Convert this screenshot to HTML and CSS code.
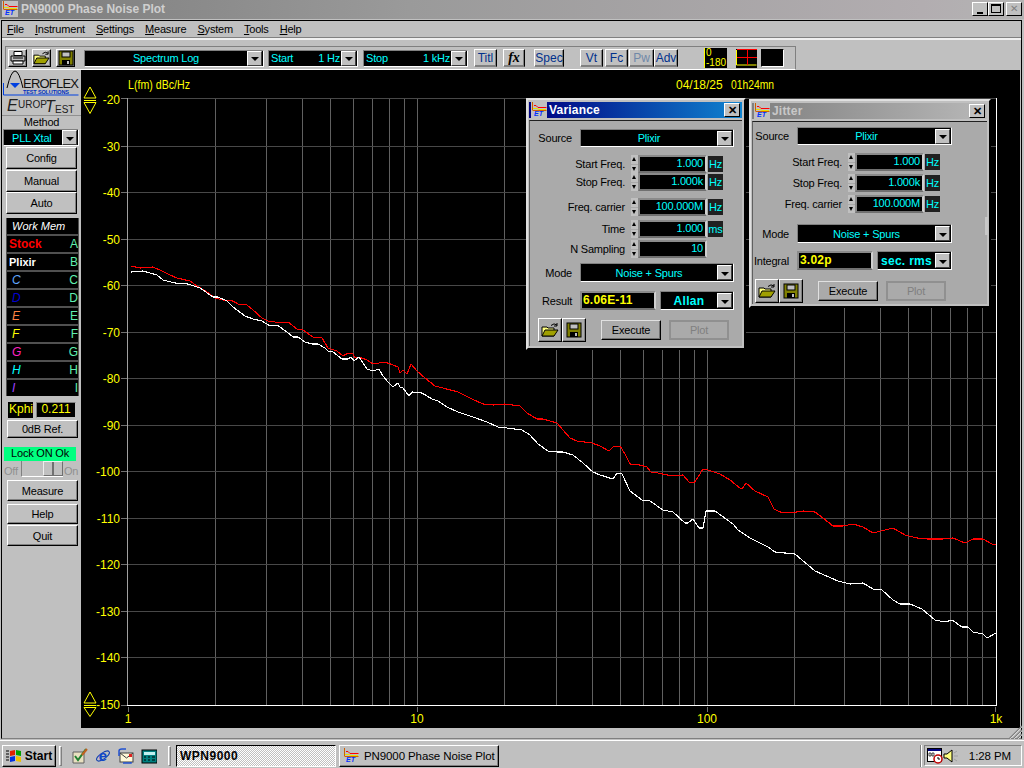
FILE: index.html
```html
<!DOCTYPE html>
<html lang="en">
<head>
    <meta charset="UTF-8">
    <title>PN9000 Phase Noise Plot</title>
    <link rel="stylesheet" href="styles.css">
</head>
<body>
    <svg class="defs" width="0" height="0">
        <symbol id="et-icon" viewBox="0 0 16 16">
            <rect width="16" height="16" fill="#c0c0c0"/>
            <path d="M1.5 0v8M1.5 8.500h14" stroke="#d06000" fill="none"/>
            <path d="M3 3.500h2l2 2h8.500" stroke="#ff0000" fill="none"/>
            <path d="M2 6.500h4l2 1h7" stroke="#e8e000" fill="none"/>
            <text x="3" y="14" class="et-mark">ET</text>
        </symbol>
        <symbol id="open-icon" viewBox="0 0 18 16">
            <path d="M1 5h5l1 1h6v8H1z" fill="#ffff80" stroke="#000"/>
            <path d="M1 14l3-6h13l-4 6z" fill="#a0a000" stroke="#000"/>
            <path d="M10 3.500q3-3 6-.5M16 1v3h-3" stroke="#000" fill="none"/>
        </symbol>
        <symbol id="save-icon" viewBox="0 0 16 16">
            <rect x="1" y="1" width="14" height="14" fill="#808000" stroke="#000"/>
            <rect x="4" y="2" width="8" height="5" fill="#c0c0c0" stroke="#000"/>
            <rect x="4" y="10" width="8" height="5" fill="#000"/>
            <rect x="9" y="11" width="2" height="3" fill="#c0c0c0"/>
        </symbol>
        <symbol id="down" viewBox="0 0 8 4"><path d="M0 0h8L4 4z" fill="#000"/></symbol>
    </svg>

    <div class="window">
        <div class="titlebar">
            <svg class="title-icon"><use href="#et-icon"/></svg>
            <span class="title-text">PN9000 Phase Noise Plot</span>
            <div class="win-buttons">
                <div class="win-btn"><span class="glyph-min"></span></div>
                <div class="win-btn"><span class="glyph-max"></span></div>
                <div class="win-btn win-close">✕</div>
            </div>
        </div>

        <div class="client">
            <div class="menubar">
                <span><u>F</u>ile</span>
                <span><u>I</u>nstrument</span>
                <span><u>S</u>ettings</span>
                <span><u>M</u>easure</span>
                <span><u>S</u>ystem</span>
                <span><u>T</u>ools</span>
                <span><u>H</u>elp</span>
            </div>

            <div class="toolbar">
                <div class="toolframe">
                    <button class="btn tool-icon ml-2">
                        <svg width="16" height="14" viewBox="0 0 16 14">
                            <path d="M4 .5h8v4H4z" fill="#fff" stroke="#000"/>
                            <path d="M1 5h14v5H1z" fill="#c0c0c0" stroke="#000"/>
                            <path d="M3 10h10v3H3z" fill="#fff" stroke="#000"/>
                            <path d="M3 7h10" stroke="#000"/>
                        </svg>
                    </button>
                    <button class="btn tool-icon ml-5"><svg width="18" height="16"><use href="#open-icon"/></svg></button>
                    <button class="btn tool-icon ml-5"><svg width="16" height="16"><use href="#save-icon"/></svg></button>

                    <div class="combo tool-spectrum ml-9"><span class="combo-text">Spectrum Log</span><span class="arrow"><svg width="8" height="4"><use href="#down"/></svg></span></div>
                    <div class="combo tool-start ml-4"><span class="combo-text split"><span>Start</span><span>1 Hz</span></span><span class="arrow"><svg width="8" height="4"><use href="#down"/></svg></span></div>
                    <div class="combo tool-stop ml-5"><span class="combo-text split"><span>Stop</span><span>1 kHz</span></span><span class="arrow"><svg width="8" height="4"><use href="#down"/></svg></span></div>

                    <button class="btn tool-text tool-titl ml-6">Titl</button>
                    <button class="btn tool-text tool-fx ml-6">fx</button>
                    <button class="btn tool-text tool-spec ml-9">Spec</button>
                    <button class="btn tool-text tool-vt ml-16">Vt</button>
                    <button class="btn tool-text tool-fc ml-2">Fc</button>
                    <button class="btn tool-text tool-pw tool-off ml-1">Pw</button>
                    <button class="btn tool-text tool-adv">Adv</button>

                    <div class="range ml-26"><span>0</span><span>-180</span></div>
                    <div class="grid-toggle ml-9">
                        <svg width="21" height="19" viewBox="0 0 21 19">
                            <rect width="21" height="19" fill="#000"/>
                            <path d="M.5 1v15h20" stroke="#ffff00" fill="none"/>
                            <path d="M1 8.500h20M11.500 1v15M1 .5h20" stroke="#ff0000" fill="none"/>
                        </svg>
                    </div>
                    <div class="color-box ml-4"></div>
                </div>
            </div>

            <div class="main">
                <div class="sidebar">
                    <svg class="logo" width="79" height="45" viewBox="0 0 79 45">
                        <path d="M1.500 13v12h75" stroke="#0040e0" fill="none"/>
                        <path d="M5 18q4-17 8-17t8 17" stroke="#000" fill="none"/>
                        <path d="M8 13h10l-5 5z" fill="#0040e0"/>
                        <text x="21" y="18" class="logo-main" textLength="56">EROFLEX</text>
                        <text x="21" y="24" class="logo-small" textLength="46">TEST SOLUTIONS</text>
                        <text x="5" y="41" class="logo-big">E</text>
                        <text x="16" y="38" class="logo-euro">UROP</text>
                        <text x="43" y="42" class="logo-big">T</text>
                        <text x="53" y="43" class="logo-euro">EST</text>
                    </svg>
                    <div class="method-label">Method</div>
                    <div class="combo method-combo"><span class="combo-text left">PLL Xtal</span><span class="arrow"><svg width="8" height="4"><use href="#down"/></svg></span></div>
                    <button class="btn side-btn config-btn">Config</button>
                    <button class="btn side-btn manual-btn">Manual</button>
                    <button class="btn side-btn auto-btn">Auto</button>

                    <div class="mem-list">
                        <div class="mem-row"><span class="mem-name mem-title">Work Mem</span></div>
                        <div class="mem-row"><span class="mem-name mem-stock">Stock</span><span class="mem-key">A</span></div>
                        <div class="mem-row"><span class="mem-name mem-plixir">Plixir</span><span class="mem-key">B</span></div>
                        <div class="mem-row"><span class="mem-name mem-c">C</span><span class="mem-key">C</span></div>
                        <div class="mem-row"><span class="mem-name mem-d">D</span><span class="mem-key">D</span></div>
                        <div class="mem-row"><span class="mem-name mem-e">E</span><span class="mem-key">E</span></div>
                        <div class="mem-row"><span class="mem-name mem-f">F</span><span class="mem-key">F</span></div>
                        <div class="mem-row"><span class="mem-name mem-g">G</span><span class="mem-key">G</span></div>
                        <div class="mem-row"><span class="mem-name mem-h">H</span><span class="mem-key">H</span></div>
                        <div class="mem-row"><span class="mem-name mem-i">I</span><span class="mem-key">I</span></div>
                    </div>

                    <div class="kphi-row">
                        <span class="kphi-label">Kphi</span>
                        <span class="kphi-value">0.211</span>
                    </div>
                    <button class="btn side-btn ref-btn">0dB Ref.</button>
                    <div class="lock">Lock ON Ok</div>
                    <div class="switch-row">
                        <span class="switch-label">Off</span>
                        <div class="switch"><div class="switch-thumb"></div></div>
                        <span class="switch-label">On</span>
                    </div>
                    <button class="btn side-btn measure-btn">Measure</button>
                    <button class="btn side-btn help-btn">Help</button>
                    <button class="btn side-btn quit-btn">Quit</button>
                </div>

                <svg class="plot" viewBox="81 70 939 658" width="939" height="658">
                    <g class="grid-v">
                        <path d="M215.500 98v607M266.500 98v607M302.500 98v607M330.500 98v607M353.500 98v607M372.500 98v607M389.500 98v607M404.500 98v607M417.500 98v607"/>
                        <path d="M504.500 98v607M556.500 98v607M592.500 98v607M620.500 98v607M643.500 98v607M662.500 98v607M679.500 98v607M694.500 98v607M707.500 98v607"/>
                        <path d="M794.500 98v607M844.500 98v607M880.500 98v607M908.500 98v607M931.500 98v607M950.500 98v607M967.500 98v607M982.500 98v607"/>
                    </g>
                    <path class="grid-h" d="M127 98.500h869M127 146.500h869M127 192.500h869M127 239.500h869M127 285.500h869M127 332.500h869M127 378.500h869M127 425.500h869M127 471.500h869M127 518.500h869M127 564.500h869M127 611.500h869M127 657.500h869"/>
                    <path class="ticks" d="M121 98.500h6M121 146.500h6M121 192.500h6M121 239.500h6M121 285.500h6M121 332.500h6M121 378.500h6M121 425.500h6M121 471.500h6M121 518.500h6M121 564.500h6M121 611.500h6M121 657.500h6M121 705.500h6M128.500 707v5M417.500 707v5M707.500 707v5M995.500 707v5"/>
                    <path class="frame-l" d="M127.500 98v607"/>
                    <path class="frame" d="M127 705.500h870M996.500 98v608"/>

                    <polyline class="trace-red" points="131,266 140,268 153,267 162,271 170,275 177,278 190,281 197,286 207,292 215,298 223,300 233,301 238,304 247,305 253,310 262,318 268,321 275,322 282,323 288,322 297,329 303,330 313,337 322,338 328,348 337,351 343,356 348,353 353,354 355,358 359,357 367,360 373,364 385,362 393,365 398,367 400,373 403,370 407,374 411,364 417,371 425,378 435,386 443,388 458,392 472,399 483,404 493,405 505,404 520,406 527,413 537,419 543,419 557,423 563,430 570,438 577,441 592,443 600,446 609,451 613,447 620,446 625,454 630,464 640,465 647,467 651,472 658,473 672,476 683,475 689,482 694,483 698,477 703,469 708,470 720,474 730,480 740,488 742,489 746,483 755,491 768,497 774,509 780,512 790,513 803,511 815,512 823,518 833,526 843,526 853,524 863,527 873,533 893,528 905,535 917,538 927,539 942,539 953,538 965,543 973,539 983,539 992,544 996,545"/>
                    <polyline class="trace-white" points="131,272 143,271 150,273 157,275 163,280 175,283 188,284 200,288 213,297 218,297 227,301 233,307 245,316 253,319 262,321 270,326 277,325 287,332 293,337 298,337 305,342 312,344 318,344 325,348 328,351 333,352 342,359 348,359 351,357 354,361 359,357 363,363 367,369 373,371 379,369 383,376 388,382 393,387 398,383 400,387 403,388 409,396 412,392 422,393 432,399 438,401 447,407 458,412 473,417 487,422 498,427 507,428 522,430 530,435 538,444 548,451 557,452 563,452 573,455 583,463 593,472 600,475 613,479 617,473 622,474 630,491 642,500 650,501 663,510 673,512 685,523 688,523 693,519 699,528 703,528 706,511 715,511 733,524 738,530 750,538 768,547 775,552 795,554 815,571 838,581 850,584 863,583 873,589 882,590 893,600 900,604 910,604 922,609 935,620 945,622 952,620 962,627 968,627 973,632 983,634 987,638 996,633"/>

                    <g class="scale-arrows">
                        <path d="M90 87l6 11H84zM84 100.500h12M84 102.500h12l-6 11z"/>
                        <path d="M90 692l6 11H84zM84 705.500h12M84 707.500h12l-6 9z"/>
                    </g>
                    <g class="plot-text">
                        <text x="128" y="89" textLength="62" lengthAdjust="spacingAndGlyphs">L(fm) dBc/Hz</text>
                        <text x="676" y="89">04/18/25</text>
                        <text x="731" y="89" textLength="43" lengthAdjust="spacingAndGlyphs">01h24mn</text>
                        <text class="end" x="120" y="104">-20</text>
                        <text class="end" x="120" y="151">-30</text>
                        <text class="end" x="120" y="197">-40</text>
                        <text class="end" x="120" y="244">-50</text>
                        <text class="end" x="120" y="290">-60</text>
                        <text class="end" x="120" y="337">-70</text>
                        <text class="end" x="120" y="383">-80</text>
                        <text class="end" x="120" y="430">-90</text>
                        <text class="end" x="120" y="476">-100</text>
                        <text class="end" x="120" y="523">-110</text>
                        <text class="end" x="120" y="569">-120</text>
                        <text class="end" x="120" y="616">-130</text>
                        <text class="end" x="120" y="662">-140</text>
                        <text class="end" x="120" y="709">-150</text>
                        <text class="mid" x="128" y="723">1</text>
                        <text class="mid" x="417" y="723">10</text>
                        <text class="mid" x="707" y="723">100</text>
                        <text class="mid" x="996" y="723">1k</text>
                    </g>
                </svg>
            </div>
        </div>

        <svg class="resize-grip" width="14" height="14" viewBox="0 0 14 14">
            <path d="M1 14L14 1M5 14l9-9M9 14l5-5" stroke="#808080" stroke-width="1.500"/>
            <path d="M2 14L14 2M6 14l8-8M10 14l4-4" stroke="#fff" stroke-width=".6"/>
        </svg>
    </div>

    <div class="dialog variance">
        <div class="dlg-title dlg-active">
            <svg class="dlg-icon"><use href="#et-icon"/></svg>
            <span class="dlg-name">Variance</span>
            <div class="dlg-close">✕</div>
        </div>
        <div class="dlg-body">
            <div class="dlg-row"><span class="row-label">Source</span><div class="combo dlg-combo"><span class="combo-text">Plixir</span><span class="arrow"><svg width="8" height="4"><use href="#down"/></svg></span></div></div>
            <div class="dlg-row mt-8"><span class="freq-label">Start Freq.</span><div class="spin"><i class="spin-up"></i><i class="spin-down"></i></div><div class="field">1.000</div><div class="unit">Hz</div></div>
            <div class="dlg-row"><span class="freq-label">Stop Freq.</span><div class="spin"><i class="spin-up"></i><i class="spin-down"></i></div><div class="field">1.000k</div><div class="unit">Hz</div></div>
            <div class="dlg-row mt-7"><span class="freq-label">Freq. carrier</span><div class="spin"><i class="spin-up"></i><i class="spin-down"></i></div><div class="field">100.000M</div><div class="unit">Hz</div></div>
            <div class="dlg-row mt-4"><span class="freq-label">Time</span><div class="spin"><i class="spin-up"></i><i class="spin-down"></i></div><div class="field">1.000</div><div class="unit">ms</div></div>
            <div class="dlg-row mt-2"><span class="freq-label">N Sampling</span><div class="spin"><i class="spin-up"></i><i class="spin-down"></i></div><div class="field">10</div></div>
            <div class="dlg-row tall mt-5"><span class="row-label">Mode</span><div class="combo dlg-combo"><span class="combo-text">Noise + Spurs</span><span class="arrow"><svg width="8" height="4"><use href="#down"/></svg></span></div></div>
            <div class="dlg-row tall mt-9"><span class="row-label">Result</span><div class="result">6.06E-11</div><div class="combo result-combo"><span class="combo-text bold">Allan</span><span class="arrow"><svg width="8" height="4"><use href="#down"/></svg></span></div></div>
            <div class="dlg-actions mt-8">
                <button class="btn file-btn"><svg width="18" height="16"><use href="#open-icon"/></svg></button>
                <button class="btn file-btn"><svg width="16" height="16"><use href="#save-icon"/></svg></button>
                <button class="btn action-btn execute">Execute</button>
                <button class="btn action-btn plot-btn">Plot</button>
            </div>
        </div>
    </div>

    <div class="dialog jitter">
        <div class="dlg-title dlg-inactive">
            <svg class="dlg-icon"><use href="#et-icon"/></svg>
            <span class="dlg-name">Jitter</span>
            <div class="dlg-close">✕</div>
        </div>
        <div class="dlg-body">
            <div class="dlg-row"><span class="row-label">Source</span><div class="combo dlg-combo"><span class="combo-text">Plixir</span><span class="arrow"><svg width="8" height="4"><use href="#down"/></svg></span></div></div>
            <div class="dlg-row mt-8"><span class="freq-label">Start Freq.</span><div class="spin"><i class="spin-up"></i><i class="spin-down"></i></div><div class="field">1.000</div><div class="unit">Hz</div></div>
            <div class="dlg-row mt-3"><span class="freq-label">Stop Freq.</span><div class="spin"><i class="spin-up"></i><i class="spin-down"></i></div><div class="field">1.000k</div><div class="unit">Hz</div></div>
            <div class="dlg-row mt-3"><span class="freq-label">Freq. carrier</span><div class="spin"><i class="spin-up"></i><i class="spin-down"></i></div><div class="field">100.000M</div><div class="unit">Hz</div></div>
            <div class="dlg-row tall mt-11"><span class="row-label">Mode</span><div class="combo dlg-combo"><span class="combo-text">Noise + Spurs</span><span class="arrow"><svg width="8" height="4"><use href="#down"/></svg></span></div></div>
            <div class="dlg-row tall mt-8"><span class="row-label">Integral</span><div class="result">3.02p</div><div class="combo result-combo"><span class="combo-text bold">sec. rms</span><span class="arrow"><svg width="8" height="4"><use href="#down"/></svg></span></div></div>
            <div class="dlg-actions mt-9">
                <button class="btn file-btn"><svg width="18" height="16"><use href="#open-icon"/></svg></button>
                <button class="btn file-btn"><svg width="16" height="16"><use href="#save-icon"/></svg></button>
                <button class="btn action-btn execute">Execute</button>
                <button class="btn action-btn plot-btn">Plot</button>
            </div>
        </div>
        <div class="dlg-scroll"></div>
    </div>

    <div class="taskbar">
        <button class="btn start-btn">
            <svg width="16" height="14" viewBox="0 0 16 14">
                <path d="M0 2h3M0 5h3M0 8h3M0 11h3" stroke="#000"/>
                <path d="M4 2l5-1v5l-5 1z" fill="#e02000"/>
                <path d="M10 1l5 1v5l-5-1z" fill="#00a000"/>
                <path d="M4 8l5-1v5l-5 1z" fill="#0030e0"/>
                <path d="M10 7l5 1v5l-5-1z" fill="#f0c000"/>
            </svg>
            <span>Start</span>
        </button>
        <div class="handle"></div>
        <div class="quick-launch">
            <svg width="16" height="16" viewBox="0 0 16 16">
                <path d="M1 4h11v11H1z" fill="#e8e0c0" stroke="#606060"/>
                <path d="M3 8l3 4 8-11" stroke="#208030" stroke-width="2" fill="none"/>
                <path d="M10 7l5-6" stroke="#c06020" stroke-width="2"/>
            </svg>
            <svg width="16" height="16" viewBox="0 0 16 16">
                <ellipse cx="8" cy="8" rx="7.500" ry="3" transform="rotate(-35 8 8)" fill="none" stroke="#1040b0"/>
                <text x="8" y="13" class="ie-mark">e</text>
            </svg>
            <svg width="16" height="16" viewBox="0 0 16 16">
                <rect x="2" y="5" width="13" height="9" fill="#fff8d8" stroke="#404040"/>
                <path d="M2 5l6.500 5L15 5" stroke="#404040" fill="none"/>
                <rect x="11" y="6" width="3" height="3" fill="#e02020"/>
                <path d="M1 8V3q0-2 3-2h4M13 14v1H5" stroke="#2050d0" stroke-width="1.500" fill="none"/>
            </svg>
            <svg width="16" height="16" viewBox="0 0 16 16">
                <rect x="1" y="2" width="15" height="13" fill="#008080" stroke="#000"/>
                <rect x="3" y="4" width="11" height="3" fill="#c0f0f0"/>
                <path d="M3 9h2M7 9h2M11 9h3M3 12h2M7 12h2M11 12h3" stroke="#000"/>
            </svg>
        </div>
        <div class="handle"></div>
        <div class="task task-active">WPN9000</div>
        <button class="btn task">
            <svg class="task-icon"><use href="#et-icon"/></svg>
            <span class="task-name">PN9000 Phase Noise Plot</span>
        </button>
        <div class="tray-handle"></div>
        <div class="tray">
            <svg width="16" height="16" viewBox="0 0 16 16">
                <rect x=".5" y=".5" width="14" height="13" fill="#fff" stroke="#000"/>
                <rect x="1" y="1" width="13" height="2" fill="#000080"/>
                <path d="M2 5h2v3H2zM5 5h2v3H5z" fill="none" stroke="#000" stroke-width=".7"/>
                <circle cx="11" cy="11" r="4" fill="#fff" stroke="#c00000" stroke-width="1.500"/>
                <path d="M11 9v2h2" stroke="#000" fill="none"/>
            </svg>
            <svg width="16" height="14" viewBox="0 0 16 14">
                <path d="M1 5h3l5-4v12L4 9H1z" fill="#ffff80" stroke="#000"/>
                <path d="M11 4l3-2M11 7h4M11 10l3 2" stroke="#a0a0a0"/>
            </svg>
            <span class="clock">1:28 PM</span>
        </div>
    </div>
</body>
</html>
```

FILE: styles.css
```css
* {
    box-sizing: border-box;
}

html, body {
    margin: 0;
    padding: 0;
    width: 1024px;
    height: 768px;
    overflow: hidden;
    background-color: #c0c0c0;
    font-family: "Liberation Sans", Arial, sans-serif;
    font-size: 11px;
    letter-spacing: -0.2px;
    color: #000;
}

.defs {
    position: absolute;
}

/* raised win9x button */
.btn {
    display: flex;
    align-items: center;
    justify-content: center;
    padding: 0;
    font-family: inherit;
    font-size: 11px;
    letter-spacing: inherit;
    color: #000;
    background-color: #c0c0c0;
    border: 1px solid;
    border-color: #fff #000 #000 #fff;
    box-shadow: inset -1px -1px 0 #808080;
}

/* main window */
.window {
    position: relative;
    height: 740px;
    display: flex;
    flex-direction: column;
}

.titlebar {
    height: 20px;
    flex: none;
    display: flex;
    align-items: center;
    padding: 0 2px 1px 2px;
    background: linear-gradient(90deg, #7c7c7c, #9a9a9a 40%, #b2adb0 90%, #b4b4b4);
    border-bottom: 1px solid #c0c0c0;
}

.title-icon {
    width: 16px;
    height: 16px;
    flex: none;
}

.et-mark {
    font: italic bold 7px "Liberation Sans", sans-serif;
    letter-spacing: 0;
    fill: #0030ff;
}

.title-text {
    margin-left: 3px;
    font-size: 12px;
    font-weight: bold;
    letter-spacing: 0;
    color: #cfcfcf;
}

.win-buttons {
    margin-left: auto;
    display: flex;
}

.win-btn {
    width: 16px;
    height: 14px;
    margin-left: 0;
    position: relative;
    display: flex;
    justify-content: center;
    background-color: #c0c0c0;
    border: 1px solid;
    border-color: #fff #000 #000 #fff;
}

.glyph-min {
    width: 6px;
    height: 2px;
    margin-top: 9px;
    background-color: #000;
}

.glyph-max {
    width: 10px;
    height: 9px;
    margin-top: 1px;
    border: 1px solid #000;
    border-top-width: 2px;
}

.win-close {
    margin-left: 2px;
    color: #808080;
    font-size: 10px;
    line-height: 12px;
}

.client {
    flex: 1;
    min-height: 0;
    margin: 0 2px 1px 1px;
    border: 1px solid #000;
    border-bottom-color: #808080;
    display: flex;
    flex-direction: column;
}

.menubar {
    height: 19px;
    flex: none;
    display: flex;
    align-items: center;
    gap: 11px;
    padding: 0 0 2px 5px;
    border-bottom: 2px solid;
    border-bottom-color: #f0f0f0;
    box-shadow: inset 0 -1px 0 #808080;
}

.toolbar {
    height: 30px;
    flex: none;
    padding: 6px 0 0 3px;
}

.toolframe {
    width: 791px;
    height: 24px;
    display: flex;
    align-items: center;
    border: 1px solid;
    border-color: #808080 #808080 #fff #808080;
}

.ml-1 { margin-left: 1px; }
.ml-2 { margin-left: 2px; }
.ml-4 { margin-left: 4px; }
.ml-5 { margin-left: 5px; }
.ml-6 { margin-left: 6px; }
.ml-9 { margin-left: 9px; }
.ml-16 { margin-left: 16px; }
.ml-26 { margin-left: 26px; }

.mt-2 { margin-top: 2px; }
.mt-3 { margin-top: 3px; }
.mt-4 { margin-top: 4px; }
.mt-5 { margin-top: 5px; }
.mt-7 { margin-top: 7px; }
.mt-8 { margin-top: 8px; }
.mt-9 { margin-top: 9px; }
.mt-11 { margin-top: 11px; }

.tool-icon {
    width: 19px;
    height: 18px;
    flex: none;
}

.tool-text {
    height: 18px;
    flex: none;
    color: #00308c;
    font-size: 12px;
    letter-spacing: 0;
    border-color: #fff #000 #808080 #fff;
}

.tool-titl { width: 23px; }
.tool-fx {
    width: 22px;
    color: #000;
    font: italic bold 14px "Liberation Serif", serif;
}
.tool-spec { width: 30px; }
.tool-vt { width: 23px; }
.tool-fc { width: 23px; }
.tool-pw { width: 25px; }
.tool-adv { width: 24px; }
.tool-off { color: #7088a8; }

/* black combo boxes */
.combo {
    display: flex;
    align-items: center;
    flex: none;
    height: 17px;
    padding-right: 1px;
    background-color: #000;
    color: #00ffff;
    border: 1px solid;
    border-color: #808080 #fff #fff #808080;
}

.combo-text {
    flex: 1;
    min-width: 0;
    text-align: center;
    white-space: nowrap;
}

.combo-text.split {
    display: flex;
    justify-content: space-between;
    padding: 0 1px 0 2px;
}

.combo-text.left {
    padding-left: 8px;
    text-align: left;
}

.combo-text.bold {
    font-size: 12px;
    font-weight: bold;
    letter-spacing: 0.3px;
}

.arrow {
    width: 15px;
    height: 15px;
    flex: none;
    display: flex;
    align-items: center;
    justify-content: center;
    background-color: #c0c0c0;
    border: 1px solid;
    border-color: #fff #404040 #404040 #fff;
}

.arrow svg {
    display: block;
    margin-top: 2px;
}

.tool-spectrum { width: 180px; }
.tool-start { width: 90px; }
.tool-stop { width: 105px; }

.range {
    width: 23px;
    height: 20px;
    flex: none;
    display: flex;
    flex-direction: column;
    padding-left: 1px;
    background-color: #000;
    color: #ffff00;
    font-size: 10px;
    line-height: 10px;
    letter-spacing: 0;
    border-left: 1px solid #ffff00;
}

.grid-toggle {
    width: 21px;
    height: 19px;
    flex: none;
}

.grid-toggle svg {
    display: block;
}

.color-box {
    width: 23px;
    height: 18px;
    flex: none;
    background-color: #000;
    border: 1px solid;
    border-color: #000 #fff #fff #000;
}

/* sidebar + plot */
.main {
    flex: 1;
    min-height: 0;
    display: flex;
}

.sidebar {
    width: 79px;
    flex: none;
    display: flex;
    flex-direction: column;
}

.logo {
    display: block;
    flex: none;
    letter-spacing: 0;
}

.logo-main {
    font-size: 13px;
    fill: #101010;
}

.logo-small {
    font-size: 5.500px;
    font-weight: bold;
    fill: #0030c0;
}

.logo-euro {
    font-size: 10px;
    fill: #202020;
}

.logo-big {
    font-size: 16px;
    font-style: italic;
    fill: #202020;
}

.method-label {
    height: 14px;
    flex: none;
    border-top: 1px solid #909090;
    text-align: center;
    line-height: 13px;
}

.method-combo {
    width: 76px;
    margin-left: 1px;
}

.side-btn {
    width: 71px;
    flex: none;
    margin-left: 4px;
    border-width: 1px;
    border-color: #fff #000 #000 #fff;
    box-shadow: inset -1px -1px 0 #808080;
}

.config-btn { height: 22px; margin-top: 1px; }
.manual-btn { height: 22px; margin-top: 1px; }
.auto-btn { height: 22px; }

.mem-list {
    width: 73px;
    height: 178px;
    margin-top: 4px;
    margin-left: 4px;
    flex: none;
    display: flex;
    flex-direction: column;
    gap: 2px;
    background-color: #505050;
    padding: 0 1px;
}

.mem-row {
    height: 16px;
    flex: none;
    display: flex;
    align-items: center;
    justify-content: space-between;
    padding-left: 2px;
    background-color: #000;
    font-size: 12px;
    letter-spacing: 0;
}

.mem-name {
    font-style: italic;
}

.mem-title { color: #fff; font-size: 11px; padding-left: 3px; }
.mem-stock { color: #ff0000; font-weight: bold; font-style: normal; }
.mem-plixir { color: #fff; font-weight: bold; font-style: normal; font-size: 11px; }
.mem-c { color: #60a8ff; padding-left: 3px; }
.mem-d { color: #0000d0; padding-left: 3px; }
.mem-e { color: #ff8040; padding-left: 3px; }
.mem-f { color: #ffff00; padding-left: 3px; }
.mem-g { color: #ff20c0; padding-left: 3px; }
.mem-h { color: #00ffff; padding-left: 3px; }
.mem-i { color: #a040ff; padding-left: 3px; }

.mem-key {
    color: #60f0b0;
}

.kphi-row {
    height: 16px;
    margin-top: 6px;
    margin-left: 6px;
    flex: none;
    display: flex;
    align-items: center;
    gap: 3px;
    color: #ffff00;
    font-size: 12px;
    letter-spacing: 0;
}

.kphi-label {
    width: 25px;
    height: 16px;
    padding-left: 1px;
    background-color: #000;
    line-height: 15px;
}

.kphi-value {
    width: 40px;
    height: 16px;
    background-color: #000;
    border: 1px solid #808080;
    border-color: #808080 #c0c0c0 #c0c0c0 #808080;
    text-align: center;
    line-height: 13px;
}

.ref-btn { height: 18px; margin-top: 2px; width: 71px; margin-left: 5px; }

.lock {
    width: 72px;
    height: 14px;
    margin-top: 9px;
    margin-left: 2px;
    flex: none;
    background-color: #00ff80;
    text-align: center;
    line-height: 13px;
}

.switch-row {
    height: 16px;
    flex: none;
    display: flex;
    align-items: flex-end;
    margin-left: 2px;
}

.switch-label {
    width: 17px;
    color: #909090;
    line-height: 11px;
}

.switch {
    width: 42px;
    height: 16px;
    flex: none;
    margin-right: 1px;
    border-left: 1px solid #808080;
    border-bottom: 1px solid #fff;
    display: flex;
    justify-content: flex-end;
}

.switch-thumb {
    width: 20px;
    border: 1px solid;
    border-color: #eee #707070 #707070 #eee;
    background: linear-gradient(90deg, #c0c0c0 45%, #707070 45%, #707070 55%, #c0c0c0 55%);
}

.measure-btn { height: 21px; margin-top: 3px; margin-left: 5px; }
.help-btn { height: 20px; margin-top: 3px; margin-left: 5px; }
.quit-btn { height: 21px; margin-top: 1px; margin-left: 5px; }

.plot {
    display: block;
    flex: none;
    background-color: #000;
}

.grid-v path {
    stroke: #606060;
    fill: none;
    shape-rendering: crispEdges;
}

.grid-h {
    stroke: #484848;
    fill: none;
    shape-rendering: crispEdges;
}

.ticks {
    stroke: #707070;
    fill: none;
    shape-rendering: crispEdges;
}

.frame-l {
    stroke: #a0a0a0;
    shape-rendering: crispEdges;
}

.frame {
    stroke: #fff;
    fill: none;
    shape-rendering: crispEdges;
}

.trace-red, .trace-white {
    fill: none;
    stroke-width: 1.100;
    shape-rendering: crispEdges;
}

.trace-red { stroke: #ff0000; }
.trace-white { stroke: #fff; }

.scale-arrows path {
    stroke: #ffff00;
    fill: none;
}

.plot-text text {
    fill: #ffff00;
    font-size: 12px;
    letter-spacing: 0;
}

.plot-text .end { text-anchor: end; }
.plot-text .mid { text-anchor: middle; }

.resize-grip {
    position: absolute;
    right: 2px;
    bottom: 1px;
}

/* floating dialogs */
.dialog {
    position: absolute;
    display: flex;
    flex-direction: column;
    background-color: #c0c0c0;
    border: 2px solid;
    border-color: #e0e0e0 #000 #000 #e0e0e0;
    padding: 2px 2px 2px 1px;
}

.variance {
    left: 526px;
    top: 98px;
    width: 220px;
    height: 252px;
}

.jitter {
    left: 749px;
    top: 99px;
    width: 242px;
    height: 209px;
}

.dlg-title {
    height: 16px;
    flex: none;
    display: flex;
    align-items: center;
    padding: 0 2px 0 2px;
}

.dlg-active { background: linear-gradient(90deg, #000080, #1084d0); }
.dlg-inactive { background: linear-gradient(90deg, #808080, #b8b8b8); }

.dlg-icon {
    width: 16px;
    height: 16px;
    flex: none;
}

.dlg-name {
    margin-left: 2px;
    font-weight: bold;
    font-size: 12px;
    letter-spacing: 0.2px;
}

.dlg-active .dlg-name { color: #fff; }
.dlg-inactive .dlg-name { color: #c8c8c8; }

.dlg-close {
    margin-left: auto;
    width: 16px;
    height: 14px;
    text-align: center;
    font-size: 11px;
    font-weight: bold;
    line-height: 12px;
    color: #000;
    background-color: #c0c0c0;
    border: 1px solid;
    border-color: #fff #000 #000 #fff;
}

.dlg-body {
    flex: 1;
    min-height: 0;
    margin-top: 2px;
    background-color: #aaaaaa;
    border-top: 1px solid #202020;
    border-left: 1px solid #606060;
}

.variance .dlg-body { padding-top: 8px; }
.jitter .dlg-body { padding-top: 5px; }

.dlg-row {
    height: 18px;
    display: flex;
    align-items: center;
}

.dlg-row.tall { height: 19px; }
.dlg-row .combo { height: 100%; }

.row-label {
    flex: none;
    text-align: right;
    margin-right: 8px;
    white-space: nowrap;
}

.variance .row-label { width: 42px; }
.jitter .row-label { width: 36px; }

.freq-label {
    flex: none;
    text-align: right;
    white-space: nowrap;
}

.variance .freq-label { width: 95px; margin-right: 6px; }
.jitter .freq-label { width: 89px; margin-right: 6px; }

.spin {
    width: 7px;
    height: 18px;
    flex: none;
    display: flex;
    flex-direction: column;
    gap: 1px;
}

.spin-up, .spin-down {
    flex: 1;
    position: relative;
    background-color: #c0c0c0;
}

.spin-up::after, .spin-down::after {
    content: "";
    position: absolute;
    left: 1px;
    top: 2px;
    border-left: 2.500px solid transparent;
    border-right: 2.500px solid transparent;
}

.spin-up::after { border-bottom: 4px solid #000; }
.spin-down::after { border-top: 4px solid #000; }

.field {
    width: 69px;
    height: 18px;
    flex: none;
    padding-right: 2px;
    background-color: #000;
    color: #00ffff;
    text-align: right;
    line-height: 13px;
    border: 2px solid;
    border-color: #8a8a8a #d0d0d0 #707070 #8a8a8a;
}

.unit {
    width: 15px;
    height: 16px;
    margin-left: 1px;
    flex: none;
    background-color: #202020;
    color: #00ffff;
    text-align: center;
    line-height: 16px;
}

.variance .dlg-combo { width: 154px; }
.jitter .dlg-combo { width: 155px; }

.result {
    width: 76px;
    height: 19px;
    flex: none;
    padding-left: 1px;
    background-color: #000;
    color: #ffff00;
    font-size: 12px;
    font-weight: bold;
    letter-spacing: 0.2px;
    line-height: 14px;
    border: 2px solid;
    border-color: #8a8a8a #d0d0d0 #707070 #8a8a8a;
}

.result-combo {
    margin-left: 4px;
}

.variance .result-combo { width: 74px; }
.jitter .result-combo { width: 75px; }

.dlg-actions {
    height: 24px;
    display: flex;
    align-items: center;
}

.variance .dlg-actions { padding-left: 8px; }
.jitter .dlg-actions { padding-left: 2px; }

.file-btn {
    width: 24px;
    height: 24px;
    flex: none;
    background-color: #aaaaaa;
}

.action-btn {
    width: 60px;
    height: 20px;
    flex: none;
    background-color: #aaaaaa;
    border-color: #e0e0e0 #000 #000 #e0e0e0;
    box-shadow: inset -1px -1px 0 #707070;
}

.execute { margin-left: 15px; }
.plot-btn {
    margin-left: 8px;
    color: #808080;
    border: 2px solid #909090;
    box-shadow: none;
}

.dlg-scroll {
    position: absolute;
    right: 1px;
    top: 116px;
    width: 3px;
    height: 18px;
    background-color: #c8c8c8;
}

/* taskbar */
.taskbar {
    height: 28px;
    display: flex;
    align-items: center;
    padding: 2px 0 0 2px;
    background-color: #c0c0c0;
    border-top: 1px solid #fff;
}

.start-btn {
    width: 54px;
    height: 22px;
    flex: none;
    gap: 3px;
    font-weight: bold;
    font-size: 12px;
    letter-spacing: 0;
}

.handle {
    width: 3px;
    height: 20px;
    flex: none;
    margin-left: 3px;
    border: 1px solid;
    border-color: #fff #808080 #808080 #fff;
}

.quick-launch {
    width: 103px;
    flex: none;
    display: flex;
    gap: 7px;
    padding-left: 10px;
}

.task {
    width: 160px;
    height: 22px;
    flex: none;
    margin-left: 3px;
    gap: 5px;
    justify-content: flex-start;
    padding-left: 3px;
}

.task-name {
    font-size: 11.500px;
    letter-spacing: -0.1px;
    white-space: nowrap;
}

.task-icon {
    width: 16px;
    height: 16px;
    flex: none;
}

.task-active {
    margin-left: 5px;
    display: flex;
    align-items: center;
    font-size: 12px;
    font-weight: bold;
    letter-spacing: 0.5px;
    background: repeating-conic-gradient(#fff 0 25%, #c0c0c0 0 50%) 0 0 / 2px 2px;
    border: 1px solid;
    border-color: #000 #fff #fff #000;
}

.ie-mark {
    font: bold 15px "Liberation Sans", sans-serif;
    letter-spacing: 0;
    text-anchor: middle;
    fill: #1048c8;
}

.tray-handle {
    width: 2px;
    height: 22px;
    flex: none;
    margin-left: auto;
    margin-right: 2px;
    border-left: 1px solid #808080;
    border-right: 1px solid #fff;
}

.tray {
    width: 98px;
    height: 21px;
    flex: none;
    margin-right: 2px;
    display: flex;
    align-items: center;
    padding-left: 2px;
    border: 1px solid;
    border-color: #808080 #fff #fff #808080;
}

.clock {
    margin-left: auto;
    margin-right: 10px;
    font-size: 11.500px;
    letter-spacing: -0.1px;
}
```
